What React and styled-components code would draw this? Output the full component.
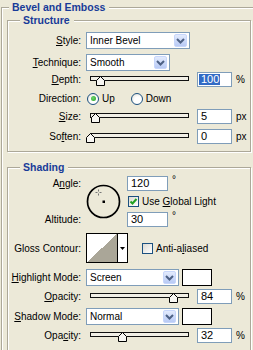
import styled, { createGlobalStyle } from "styled-components";

const GlobalStyle = createGlobalStyle`
  html, body {
    margin: 0;
    padding: 0;
    background: #ece9d8;
    overflow: hidden;
  }
  body {
    font-family: "Liberation Sans", Arial, sans-serif;
    font-size: 10px;
    color: #000;
  }
`;

function Chevron() {
  return (
    <svg width="9" height="6" viewBox="0 0 9 6">
      <path d="M1 1 L4.5 4.5 L8 1" fill="none" stroke="#4d6185" strokeWidth="2" />
    </svg>
  );
}

function SliderBar({ pos }) {
  return (
    <Slider>
      <Track />
      <Thumb style={{ left: `${pos * 0.99}px` }}>
        <svg width="9" height="10" viewBox="0 0 9 10">
          <polygon
            points="4.5,0.5 8.5,4.5 8.5,9.5 0.5,9.5 0.5,4.5"
            fill="#f7f6f2"
            stroke="#000"
          />
        </svg>
      </Thumb>
    </Slider>
  );
}

function Check({ checked }) {
  return (
    <CheckBox $ml={checked ? 1 : 14}>
      {checked && (
        <svg width="9" height="9" viewBox="0 0 9 9">
          <path d="M1.5 4.5 L3.5 6.5 L7.5 2" fill="none" stroke="#21a121" strokeWidth="2" />
        </svg>
      )}
    </CheckBox>
  );
}

function Dial() {
  return (
    <DialBox>
      <svg width="35" height="35" viewBox="0 0 35 35">
        <circle cx="17.5" cy="17.5" r="16" fill="none" stroke="#000" strokeWidth="1.7" />
        <rect x="16.5" y="16.5" width="2.5" height="2.5" fill="#000" />
        <path
          d="M12.5 5.5 v2 M12.5 9.5 v2 M9.5 8.5 h2 M13.5 8.5 h2"
          stroke="#777"
          strokeWidth="1"
        />
      </svg>
    </DialBox>
  );
}

function App() {
  return (
    <>
      <GlobalStyle />
      <Outer>
        <Legend $ml={2}>Bevel and Emboss</Legend>
        <Group $mt={-1}>
          <Legend $ml={12}>Structure</Legend>
          <Row $h={17} $mt={5}>
            <Label><u>S</u>tyle:</Label>
            <Select $w={104}>Inner Bevel<Arrow><Chevron /></Arrow></Select>
          </Row>
          <Row $h={17} $mt={5}>
            <Label><u>T</u>echnique:</Label>
            <Select $w={84}>Smooth<Arrow><Chevron /></Arrow></Select>
          </Row>
          <Row $h={15} $mt={1}>
            <Label><u>D</u>epth:</Label>
            <SliderBar pos={10} />
            <Field $w={35} $ml={7}><Value $sel>100</Value></Field>
            <Unit>%</Unit>
          </Row>
          <Row $h={15} $mt={4}>
            <Label>Direction:</Label>
            <Radio $on><Dot /></Radio>
            <RadioText>Up</RadioText>
            <Radio $ml={16} />
            <RadioText>Down</RadioText>
          </Row>
          <Row $h={15} $mt={3}>
            <Label><u>S</u>ize:</Label>
            <SliderBar pos={5} />
            <Field $w={35} $ml={7}><Value>5</Value></Field>
            <Unit>px</Unit>
          </Row>
          <Row $h={15} $mt={5}>
            <Label>So<u>f</u>ten:</Label>
            <SliderBar pos={0} />
            <Field $w={35} $ml={7}><Value>0</Value></Field>
            <Unit>px</Unit>
          </Row>
        </Group>

        <Group $mt={8}>
          <Legend $ml={12}>Shading</Legend>
          <AngleGrid>
            <GridLabel $row={1}>A<u>n</u>gle:</GridLabel>
            <Dial />
            <Cell $row={1}>
              <Field $w={41}><Value>120</Value></Field>
              <Degree>°</Degree>
            </Cell>
            <Cell $row={2}>
              <Check checked />
              <CheckText>Use <u>G</u>lobal Light</CheckText>
            </Cell>
            <GridLabel $row={3}>Altitude:</GridLabel>
            <Cell $row={3}>
              <Field $w={41}><Value>30</Value></Field>
              <Degree>°</Degree>
            </Cell>
          </AngleGrid>
          <Row $h={30} $mt={7}>
            <Label>Gloss Contour:</Label>
            <Contour>
              <ContourPreview />
              <ContourDrop>
                <svg width="5" height="3" viewBox="0 0 5 3">
                  <polygon points="0,0 5,0 2.5,3" fill="#000" />
                </svg>
              </ContourDrop>
            </Contour>
            <Check />
            <CheckText>Anti-a<u>l</u>iased</CheckText>
          </Row>
          <Row $h={17} $mt={6}>
            <Label><u>H</u>ighlight Mode:</Label>
            <Select $w={93}>Screen<Arrow><Chevron /></Arrow></Select>
            <Swatch />
          </Row>
          <Row $h={15} $mt={3}>
            <Label><u>O</u>pacity:</Label>
            <SliderBar pos={84} />
            <Field $w={35} $ml={7}><Value>84</Value></Field>
            <Unit>%</Unit>
          </Row>
          <Row $h={17} $mt={4}>
            <Label><u>S</u>hadow Mode:</Label>
            <Select $w={93}>Normal<Arrow><Chevron /></Arrow></Select>
            <Swatch />
          </Row>
          <Row $h={15} $mt={3}>
            <Label>Opa<u>c</u>ity:</Label>
            <SliderBar pos={32} />
            <Field $w={35} $ml={7}><Value>32</Value></Field>
            <Unit>%</Unit>
          </Row>
        </Group>
      </Outer>
    </>
  );
}

const Outer = styled.fieldset`
  margin: 0 0 0 1px;
  width: 252px;
  height: 350px;
  box-sizing: border-box;
  padding: 0 0 0 5px;
  border: 1px solid #aca899;
  border-right: 0;
  border-bottom: 0;
  box-shadow: inset 1px 1px 0 #fff;
  overflow: hidden;
`;

const Group = styled.fieldset`
  margin: ${(p) => p.$mt}px 0 0 0;
  width: 244px;
  box-sizing: border-box;
  padding: 0 0 7px 0;
  border: 1px solid #aca899;
  box-shadow: inset 1px 1px 0 #fff, 1px 1px 0 #fff;
`;

const Legend = styled.legend`
  margin-left: ${(p) => p.$ml}px;
  padding: 0 4px 0 3px;
  font-size: 10.5px;
  font-weight: bold;
  line-height: 14px;
  color: #183b98;
  background: #ece9d8;
`;

const Row = styled.div`
  display: flex;
  align-items: center;
  height: ${(p) => p.$h}px;
  margin-top: ${(p) => p.$mt}px;
`;

const Label = styled.span`
  flex: none;
  width: 78px;
  box-sizing: border-box;
  padding-right: 5px;
  text-align: right;
  white-space: nowrap;
`;

const Select = styled.div`
  flex: none;
  width: ${(p) => p.$w}px;
  height: 17px;
  box-sizing: border-box;
  border: 1px solid #7f9db9;
  background: #fff;
  display: flex;
  align-items: center;
  justify-content: space-between;
  padding: 0 2px 0 3px;
  white-space: nowrap;
`;

const Arrow = styled.span`
  width: 13px;
  height: 13px;
  box-sizing: border-box;
  border: 1px solid #c7d6fb;
  border-radius: 2px;
  background: linear-gradient(#e3ebfd, #b8caf5);
  display: flex;
  align-items: center;
  justify-content: center;
`;

const Slider = styled.div`
  position: relative;
  flex: none;
  align-self: flex-start;
  width: 104px;
  height: 15px;
`;

const Track = styled.div`
  margin: 4px 0 0 4px;
  width: 99px;
  height: 5px;
  box-sizing: border-box;
  border: 1px solid #111;
  background: #f1efe6;
`;

const Thumb = styled.div`
  position: absolute;
  top: 4px;
  width: 9px;
  height: 10px;
  line-height: 0;
`;

const Field = styled.div`
  flex: none;
  width: ${(p) => p.$w}px;
  height: 15px;
  margin-left: ${(p) => p.$ml || 0}px;
  box-sizing: border-box;
  border: 1px solid #7f9db9;
  background: #fff;
  padding-left: 1px;
  display: flex;
  align-items: center;
  font-size: 11px;
`;

const Value = styled.span`
  padding: 0 1px 0 2px;
  line-height: 11px;
  background: ${(p) => (p.$sel ? "#316ac5" : "transparent")};
  color: ${(p) => (p.$sel ? "#fff" : "#000")};
`;

const Unit = styled.span`
  margin-left: 4px;
`;

const Degree = styled.span`
  align-self: flex-start;
  margin: -2px 0 0 4px;
`;

const Radio = styled.span`
  flex: none;
  width: 12px;
  height: 12px;
  margin-left: ${(p) => p.$ml || 1}px;
  box-sizing: border-box;
  border: 1px solid #1c5180;
  border-radius: 50%;
  background: radial-gradient(circle at 60% 65%, #fff 40%, #dcdad0);
  display: flex;
  align-items: center;
  justify-content: center;
`;

const Dot = styled.span`
  width: 5px;
  height: 5px;
  border-radius: 50%;
  background: radial-gradient(circle at 40% 40%, #6fd46f, #21a121);
`;

const RadioText = styled.span`
  margin-left: 3px;
`;

const AngleGrid = styled.div`
  display: grid;
  grid-template-columns: 78px 41px 1fr;
  grid-template-rows: 14px 14px 14px;
  row-gap: 4px;
  align-items: center;
  margin-top: 2px;
`;

const GridLabel = styled(Label)`
  grid-column: 1;
  grid-row: ${(p) => p.$row};
`;

const DialBox = styled.div`
  grid-column: 2;
  grid-row: 1 / 4;
  align-self: center;
  width: 35px;
  height: 35px;
  line-height: 0;
`;

const Cell = styled.div`
  grid-column: 3;
  grid-row: ${(p) => p.$row};
  display: flex;
  align-items: center;
  height: 14px;
`;

const CheckBox = styled.span`
  flex: none;
  width: 11px;
  height: 11px;
  margin-left: ${(p) => p.$ml}px;
  box-sizing: border-box;
  border: 1px solid #1c5180;
  background: linear-gradient(135deg, #dcdad2, #fff);
  display: flex;
  align-items: center;
  justify-content: center;
`;

const CheckText = styled.span`
  margin-left: 3px;
  white-space: nowrap;
`;

const Contour = styled.div`
  flex: none;
  display: flex;
  width: 42px;
  height: 30px;
  box-sizing: border-box;
  border: 1px solid #000;
  background: #fff;
`;

const ContourPreview = styled.div`
  width: 30px;
  height: 100%;
  border-right: 1px solid #000;
  background: linear-gradient(to top left, #aaa698 50%, #fff 50%);
`;

const ContourDrop = styled.div`
  flex: 1;
  display: flex;
  align-items: center;
  justify-content: center;
  line-height: 0;
`;

const Swatch = styled.div`
  flex: none;
  width: 30px;
  height: 17px;
  margin-left: 3px;
  box-sizing: border-box;
  border: 1px solid #000;
  background: #fff;
`;

export default App;
